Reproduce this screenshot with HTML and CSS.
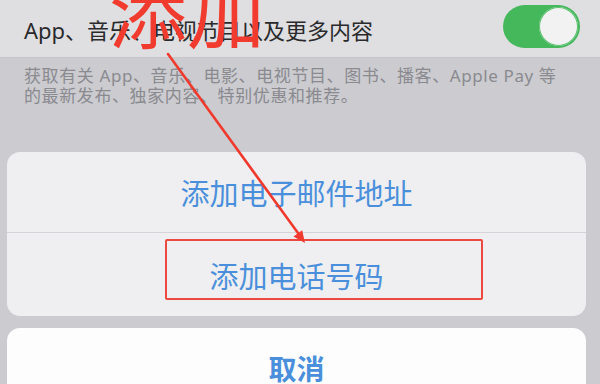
FILE: index.html
```html
<!DOCTYPE html>
<html lang="zh-CN">
<head>
<meta charset="utf-8">
<title>添加电话号码</title>
<link rel="stylesheet" href="styles.css">
</head>
<body>
<div class="page">
  <div class="setting-row">
    <span class="setting-label">App、音乐、电视节目以及更多内容</span>
    <span class="switch"><span class="knob"></span></span>
  </div>
  <div class="desc">
    <p class="desc-line">获取有关 App、音乐、电影、电视节目、图书、播客、Apple Pay 等</p>
    <p class="desc-line">的最新发布、独家内容、特别优惠和推荐。</p>
  </div>
  <div class="sheet">
    <div class="sheet-group">
      <div class="sheet-item item-first">添加电子邮件地址</div>
      <div class="sheet-item item-second">添加电话号码</div>
    </div>
    <div class="sheet-cancel">取消</div>
  </div>

  <span class="note-text">添加</span>
  <div class="note-box"></div>
  <svg class="note-arrow" width="600" height="384" viewBox="0 0 600 384">
    <line x1="168" y1="54" x2="298" y2="233" stroke="#f03a2e" stroke-width="2.6" stroke-linecap="round"/>
    <polygon points="305,243 293.5,236.5 302.2,230.2" fill="#f03a2e"/>
  </svg>
</div>
</body>
</html>
```

FILE: styles.css
```css
html, body {
  margin: 0;
  padding: 0;
}
body {
  width: 600px;
  height: 384px;
  overflow: hidden;
  background: #cbcbd0;
  font-family: "Noto Sans", "Noto Sans CJK SC", sans-serif;
}
.page {
  position: relative;
  width: 600px;
  height: 384px;
  overflow: hidden;
}
.setting-row {
  box-sizing: border-box;
  border-bottom: 1px solid #c6c6ca;
  height: 58px;
  background: #dfdfe1;
  display: flex;
  align-items: center;
  justify-content: space-between;
  padding: 0 20px 0 24px;
}
.setting-label {
  font-size: 22px;
  color: #2a2a2c;
}
.switch {
  width: 77px;
  height: 43px;
  border-radius: 22px;
  background: #45b85c;
  display: flex;
  align-items: center;
  justify-content: flex-end;
  padding-right: 2px;
  box-sizing: border-box;
  margin-top: -4px;
}
.knob {
  width: 39px;
  height: 39px;
  border-radius: 50%;
  background: #f2f2f2;
  box-shadow: 0 0 0 1px #5cc070 inset;
}
.desc {
  height: 94px;
  box-sizing: border-box;
  padding: 8px 0 0 24px;
}
.desc-line {
  margin: 0;
  font-size: 17px;
  line-height: 20px;
  color: #8a8a8f;
  white-space: nowrap;
  letter-spacing: 0.6px;
}
.sheet {
  padding: 0 14px 0 7px;
  display: flex;
  flex-direction: column;
  gap: 12px;
}
.sheet-group {
  background: #efeff1;
  border-radius: 13px;
  overflow: hidden;
}
.sheet-item {
  display: flex;
  align-items: center;
  justify-content: center;
  font-family: "Noto Sans CJK SC", sans-serif;
  font-size: 29px;
  color: #4a8fdb;
}
.item-first {
  height: 80px;
  border-bottom: 1px solid #d4d4d8;
}
.item-second {
  height: 83px;
}
.sheet-cancel {
  height: 80px;
  background: #fdfdfd;
  border-radius: 13px;
  display: flex;
  align-items: center;
  justify-content: center;
  font-family: "Noto Sans CJK SC", sans-serif;
  font-size: 28px;
  font-weight: 600;
  color: #4a8fdb;
}
.note-text {
  position: absolute;
  left: 109px;
  top: -30px;
  font-family: "Noto Sans CJK SC", sans-serif;
  font-size: 78px;
  line-height: 1;
  color: #f23b2f;
  font-weight: 400;
}
.note-box {
  position: absolute;
  left: 165px;
  top: 239px;
  width: 318px;
  height: 61px;
  box-sizing: border-box;
  border: 2px solid #ec4a40;
  border-radius: 2px;
}
.note-arrow {
  position: absolute;
  left: 0;
  top: 0;
  pointer-events: none;
}
```
